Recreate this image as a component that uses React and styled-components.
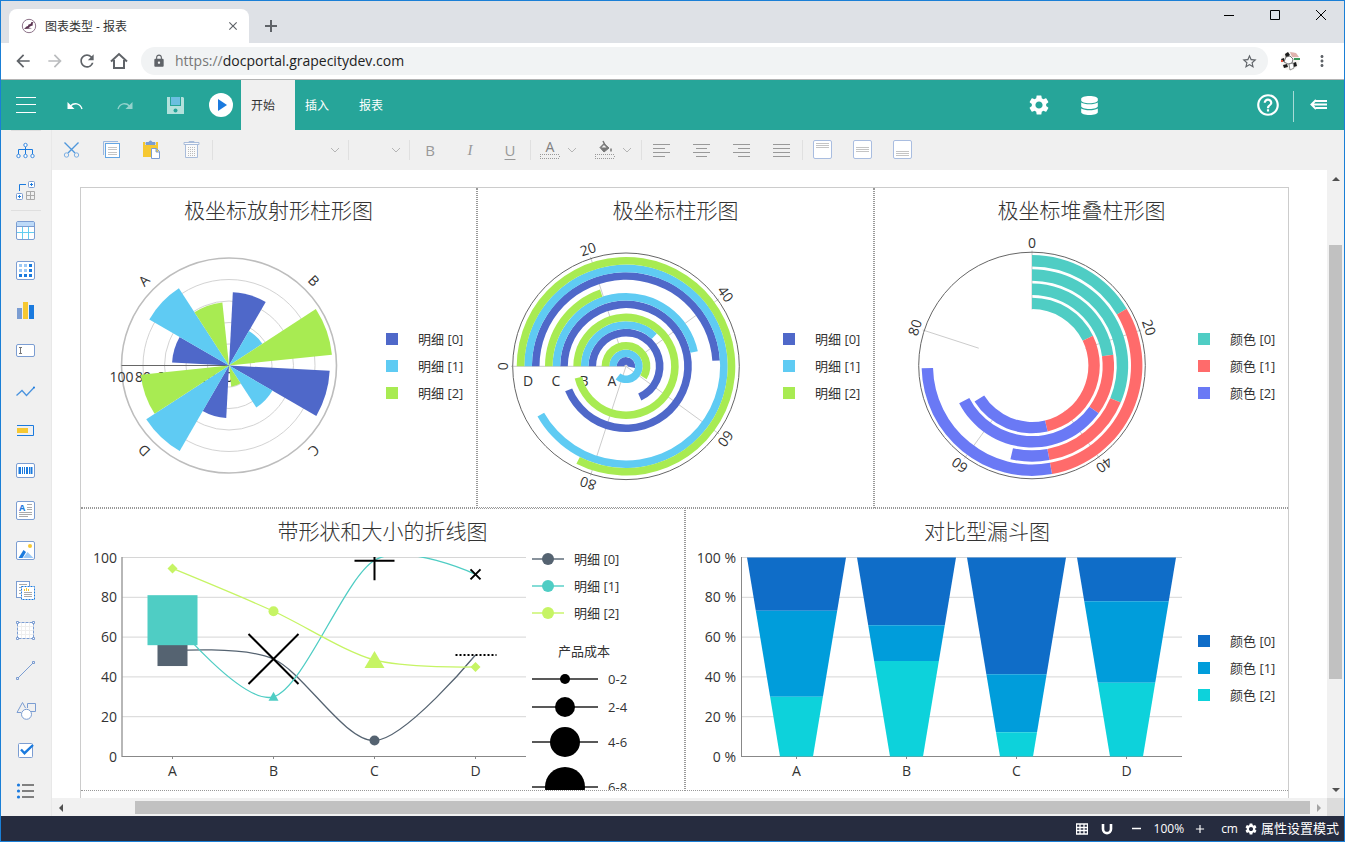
import React from 'react';
import styled, {createGlobalStyle} from 'styled-components';
import {MdArrowBack, MdArrowForward, MdRefresh, MdLock, MdStarBorder, MdMoreVert, MdClose, MdAdd, MdSettings, MdHelpOutline} from 'react-icons/md';
import {FaDatabase} from 'react-icons/fa';

const fontStack = '"Open Sans", "Noto Sans CJK SC", sans-serif';

const GlobalStyle = createGlobalStyle`
    * {
        box-sizing: border-box;
    }
    body {
        margin: 0;
        font-family: ${fontStack};
        color: #333;
    }
    button, input, select {
        font-family: inherit;
        color: inherit;
        border: 0;
        padding: 0;
        margin: 0;
        background: none;
    }
    svg {
        display: block;
    }
`;

const Window = styled.div`
    display: flex;
    flex-direction: column;
    height: 100vh;
    border: 1px solid #1a7fd6;
    overflow: hidden;
    background: #fff;
`;

const IconButton = styled.button`
    display: flex;
    align-items: center;
    justify-content: center;
    flex: none;
    width: ${props => props.$width || 20}px;
    height: 100%;
    color: ${props => props.$color || 'inherit'};
`;

const Spacer = styled.div`
    flex: 1;
`;

/* browser chrome */

const TabStrip = styled.div`
    display: flex;
    flex: none;
    height: 42px;
    background: #dee1e6;
`;

const Tabs = styled.div`
    display: flex;
    flex: 1;
    padding: 8px 0 0 8px;
`;

const BrowserTab = styled.div`
    display: flex;
    align-items: center;
    width: 240px;
    padding: 0 8px 0 12px;
    border-radius: 8px 8px 0 0;
    background: #fff;
    font-size: 12px;
`;

const TabTitle = styled.span`
    flex: 1;
    padding-left: 8px;
`;

const WindowControls = styled.div`
    display: flex;
    height: 28px;
`;

const AddressBar = styled.div`
    display: flex;
    align-items: center;
    flex: none;
    height: 37px;
    padding: 0 6px;
    border-bottom: 1px solid #b4b4b4;
    color: #5f6368;
`;

const AddressField = styled.div`
    display: flex;
    align-items: center;
    flex: 1;
    height: 28px;
    margin: 0 6px;
    padding: 0 10px 0 11px;
    border-radius: 14px;
    background: #f1f3f4;
`;

const AddressText = styled.div`
    flex: 1;
    padding-left: 9px;
    font-size: 14px;
    line-height: 28px;
    color: #777;
    b {
        font-weight: 400;
        color: #222;
    }
`;

/* ribbon */

const Ribbon = styled.header`
    display: flex;
    flex: none;
    height: 50px;
    background: #26a599;
    color: #fff;
`;

const RibbonTab = styled.button`
    width: 54px;
    padding-left: 10px;
    text-align: left;
    font-size: 12px;
    background: ${props => props.$active ? '#f0f0f0' : 'none'};
    color: ${props => props.$active ? '#333' : '#fff'};
`;

const RibbonGroup = styled.div`
    display: flex;
    margin-right: ${props => props.$gap || 0}px;
`;

const RibbonDivider = styled.div`
    width: 1px;
    height: 31px;
    margin-top: 11px;
    background: #a8dbd6;
`;

/* designer body */

const Body = styled.div`
    display: flex;
    flex: 1;
    min-height: 0;
`;

const Toolbox = styled.nav`
    flex: none;
    width: 51px;
    overflow: hidden;
    background: #f0f0f0;
    border-right: 1px solid #e8e8e8;
`;

const Tool = styled.button`
    display: flex;
    align-items: center;
    position: relative;
    width: 100%;
    height: 40px;
    padding-left: 15px;
    &::before {
        content: "";
        display: ${props => props.$divided ? 'block' : 'none'};
        position: absolute;
        top: 0;
        left: 10px;
        width: 30px;
        height: 1px;
        background: #dfdfdf;
    }
`;

const Designer = styled.div`
    display: flex;
    flex-direction: column;
    flex: 1;
    min-width: 0;
`;

const Toolbar = styled.div`
    display: flex;
    align-items: center;
    flex: none;
    height: 40px;
    background: #f0f0f0;
    color: #999;
`;

const ToolGroup = styled.div`
    display: flex;
    align-items: center;
    gap: ${props => props.$compact ? 7 : 20}px;
    height: 40px;
    padding: 0 ${props => props.$compact ? 9 : 10}px;
`;

const ToolDivider = styled.div`
    width: 1px;
    height: 20px;
    background: #e0e0e0;
`;

const SelectBox = styled.label`
    display: flex;
    align-items: center;
    width: ${props => props.$width}px;
    padding-right: 8px;
    select {
        flex: 1;
        min-width: 0;
        height: 24px;
        appearance: none;
        font-size: 13px;
    }
`;

const Letter = styled.span`
    font-size: 15px;
    line-height: 20px;
    font-family: ${props => props.$italic ? '"Liberation Serif", serif' : 'inherit'};
    font-style: ${props => props.$italic ? 'italic' : 'normal'};
    text-decoration: ${props => props.$underline ? 'underline' : 'none'};
    text-underline-offset: 3px;
`;

const Viewport = styled.div`
    display: grid;
    grid-template-columns: 1fr 17px;
    grid-template-rows: 1fr 18px;
    flex: 1;
    min-height: 0;
`;

const Canvas = styled.main`
    overflow: hidden;
    padding: 17px 38px 0 28px;
    background: #fff;
`;

const Track = styled.div`
    display: flex;
    flex-direction: ${props => props.$vertical ? 'column' : 'row'};
    padding: ${props => props.$vertical ? '0 2px' : '3px 0 2px'};
    background: #f1f1f1;
`;

const TrackButton = styled.button`
    display: flex;
    align-items: center;
    justify-content: center;
    flex: 0 0 17px;
    color: ${props => props.$muted ? '#a3a3a3' : '#505050'};
`;

const TrackPart = styled.div`
    flex: ${props => props.$share};
    background: ${props => props.$thumb ? '#c1c1c1' : 'none'};
`;

const Corner = styled.div`
    background: #dcdcdc;
`;

/* report page */

const Page = styled.section`
    min-height: 640px;
    border: 1px solid #ccc;
`;

const Row = styled.div`
    display: grid;
    grid-template-columns: ${props => props.$columns};
`;

const Cell = styled.article`
    min-width: 0;
    padding-top: 8px;
    border: 0 dotted #999;
    border-width: 0 1px 1px;
    &:first-child {
        border-left: 0;
    }
    &:last-child {
        border-right: 0;
    }
    ${Row} + ${Row} > & {
        border-top-width: 1px;
    }
`;

const Title = styled.h2`
    margin: 0;
    font-size: 21px;
    line-height: 28px;
    font-weight: 300;
    text-align: center;
`;

const ChartBody = styled.div`
    display: flex;
    align-items: center;
    padding-right: ${props => props.$flush ? 0 : 12}px;
`;

const Plot = styled.svg`
    flex: 1 1 0;
    min-width: 0;
    height: auto;
    font-size: 14px;
    fill: #333;
`;

const Legend = styled.ul`
    flex: 0 0 78px;
    margin: 0;
    padding: 0;
    list-style: none;
`;

const LegendItem = styled.li`
    display: flex;
    align-items: center;
    height: 27px;
    gap: 20px;
    font-size: 13px;
    white-space: nowrap;
`;

const Swatch = styled.span`
    width: 12px;
    height: 12px;
    background: ${props => props.$color};
`;

const SideLegend = styled.div`
    flex: 0 0 152px;
    align-self: stretch;
    contain: size;
    overflow: hidden;
    font-size: 13px;
`;

const LegendTitle = styled.div`
    width: 104px;
    margin-top: 12px;
    line-height: 27px;
    text-align: center;
`;

const SideItem = styled.div`
    display: flex;
    align-items: center;
    gap: 10px;
    height: ${props => props.$height || 27}px;
    line-height: 18px;
`;

const StatusBar = styled.footer`
    display: flex;
    align-items: center;
    justify-content: flex-end;
    flex: none;
    height: 25px;
    padding-right: 5px;
    background: #262c3f;
    color: #fff;
    font-size: 13px;
`;

const StatusText = styled.button`
    display: flex;
    align-items: center;
    gap: 3px;
    padding: 0 ${props => props.$pad || 0}px;
    font-size: ${props => props.$small ? 12 : 13}px;
    line-height: 25px;
    white-space: nowrap;
`;

const DETAIL_COLORS = ['#4f68c9', '#5fcbf3', '#a8eb52'];
const STACK_COLORS = ['#4fcdc4', '#ff6b6b', '#6a79f5'];
const LINE_COLORS = ['#556371', '#4fcdc4', '#c6f464'];
const FUNNEL_COLORS = ['#0f6dc8', '#009ddb', '#0dd2db'];
const CATEGORIES = ['A', 'B', 'C', 'D'];

const costs = [
    [53, 85.6, 59],
    [68.3, 37, 96.3],
    [93.8, 46.7, 19.8],
    [49, 91.8, 82.5]
];

// from the innermost ring to the outermost, as running totals
const stacks = [
    [17.8, 46.3, 66.1],
    [22.9, 34.9, 67.4],
    [31.3, 47.1, 53.6],
    [16.4, 47.1, 74.6]
];

const funnels = [
    [100, 73.3, 30],
    [100, 66, 48],
    [100, 41.3, 12.2],
    [100, 78, 37]
];

// degrees run clockwise from the top
const polar = (r, deg) => {
    const a = deg * Math.PI / 180;
    return [r * Math.sin(a), -r * Math.cos(a)];
};

const sector = (r0, r1, from, to) => {
    const large = to - from > 180 ? 1 : 0;
    return `M${polar(r1, from)}A${r1} ${r1} 0 ${large} 1 ${polar(r1, to)}L${polar(r0, to)}A${r0} ${r0} 0 ${large} 0 ${polar(r0, from)}Z`;
};

const PolarLabel = ({r, deg, children}) => {
    const [x, y] = polar(r, deg);
    return <text transform={`translate(${x} ${y}) rotate(${deg})`} textAnchor="middle" y="5">{children}</text>;
};

const RadialChart = () => (
    <Plot viewBox="0 0 305 283">
        <g transform="translate(148 141.5)">
            {[20, 40, 60, 80].map(v => <circle key={v} r={v * 1.075} fill="none" stroke="#d3d3d3"/>)}
            <circle r="107.5" fill="none" stroke="#bdbdbd" strokeWidth="1.6"/>
            <path d="M-107.5 0H0" stroke="#666"/>
            {[0, 20, 40, 60, 80, 100].map(v => (
                <text key={v} x={-v * 1.075} y="16" textAnchor="middle">{v}</text>
            ))}
            {costs.map((row, i) => row.map((v, j) => (
                <path
                    key={`${i}${j}`}
                    d={sector(0, v * 1.075, 273 + i * 90 + j * 27, 300 + i * 90 + j * 27)}
                    fill={DETAIL_COLORS[j]}
                />
            )))}
            {CATEGORIES.map((c, i) => <PolarLabel key={c} r={120} deg={i * 90 - 45}>{c}</PolarLabel>)}
        </g>
    </Plot>
);

const PolarChart = () => (
    <Plot viewBox="0 0 305 283">
        <g transform="translate(148 142.3)">
            {[0, 20, 40, 60, 80].map(v => (
                <path key={v} d={`M0 0L${polar(115, v * 3.6 - 90)}`} stroke="#ccc"/>
            ))}
            <circle r="113.3" fill="none" stroke="#666"/>
            {CATEGORIES.map((c, i) => (
                <text key={c} x={-14 - i * 28} y="20" textAnchor="middle">{c}</text>
            ))}
            {costs.map((row, i) => row.map((v, j) => {
                const inner = 1.6 + i * 28.3 + j * 7.6;
                return (
                    <path
                        key={`${i}${j}`}
                        d={sector(inner, inner + 7.6, -90, v * 3.6 - 90)}
                        fill={DETAIL_COLORS[j]}
                    />
                );
            }))}
            {[0, 20, 40, 60, 80].map(v => <PolarLabel key={v} r={123} deg={v * 3.6 - 90}>{v}</PolarLabel>)}
        </g>
    </Plot>
);

const StackedPolarChart = () => (
    <Plot viewBox="0 0 323 283">
        <g transform="translate(157 141.5)">
            {[0, 20, 40, 60, 80].map(v => (
                <path key={v} d={`M${polar(56, v * 3.6)}L${polar(115, v * 3.6)}`} stroke="#ccc"/>
            ))}
            <circle r="113.3" fill="none" stroke="#666"/>
            {stacks.map((row, i) => row.map((v, j) => {
                const inner = 56.4 + i * 14.2;
                return (
                    <path
                        key={`${i}${j}`}
                        d={sector(inner, inner + 11.4, (row[j - 1] || 0) * 3.6, v * 3.6)}
                        fill={STACK_COLORS[j]}
                    />
                );
            }))}
            {[0, 20, 40, 60, 80].map(v => <PolarLabel key={v} r={123} deg={v * 3.6}>{v}</PolarLabel>)}
        </g>
    </Plot>
);

const lineX = i => 91.5 + i * 101;
const lineY = v => 211.5 - v * 1.99;

const spline = values => {
    const pts = values.map((v, i) => [lineX(i), lineY(v)]);
    const slope = pts.map((p, i) => (
        i === 0 || i === pts.length - 1 ? [0, 0] : [(pts[i + 1][0] - pts[i - 1][0]) * 0.15, (pts[i + 1][1] - pts[i - 1][1]) * 0.15]
    ));
    return pts.slice(1).reduce((d, p, i) => {
        const a = pts[i];
        return `${d}C${a[0] + slope[i][0]} ${a[1] + slope[i][1]} ${p[0] - slope[i + 1][0]} ${p[1] - slope[i + 1][1]} ${p}`;
    }, `M${pts[0]}`);
};

const at = (i, v) => `translate(${lineX(i)} ${lineY(v)})`;

const LineChart = () => (
    <Plot viewBox="0 0 451 245">
        <clipPath id="plotArea"><rect x="41" y="12" width="404" height="201"/></clipPath>
        {[0, 20, 40, 60, 80, 100].map(v => (
            <g key={v}>
                <path d={`M41 ${lineY(v)}H445`} stroke="#d6d6d6"/>
                <text x="36" y={lineY(v) + 5} textAnchor="end">{v}</text>
            </g>
        ))}
        <path d="M41 12V212" stroke="#999" strokeWidth="1.4"/>
        <path d="M41 211.5H445" stroke="#888"/>
        <g clipPath="url(#plotArea)" fill="none" strokeWidth="1.3">
            <path d={spline([53, 49, 8, 51])} stroke={LINE_COLORS[0]}/>
            <rect transform={at(0, 53)} x="-15" y="-15" width="30" height="30" fill={LINE_COLORS[0]}/>
            <circle transform={at(2, 8)} r="5" fill={LINE_COLORS[0]}/>
            <path transform={at(1, 49)} d="M-25-25L25 25M25-25L-25 25" stroke="#000" strokeWidth="2"/>
            <path d={spline([68.5, 30, 98.6, 91.5])} stroke={LINE_COLORS[1]}/>
            <rect transform={at(0, 68.5)} x="-25" y="-25" width="50" height="50" fill={LINE_COLORS[1]}/>
            <path transform={at(1, 30)} d="M0-5L5 4H-5Z" fill={LINE_COLORS[1]}/>
            <path transform={at(2, 98.6)} d="M-20 0.5H20M0-20V20" stroke="#000" strokeWidth="2"/>
            <path transform={at(3, 91.5)} d="M-5-5L5 5M5-5L-5 5" stroke="#000" strokeWidth="2"/>
            <path d={spline([94.5, 73, 48.5, 45])} stroke={LINE_COLORS[2]}/>
            <path transform={at(0, 94.5)} d="M0-5L5 0L0 5L-5 0Z" fill={LINE_COLORS[2]}/>
            <circle transform={at(1, 73)} r="5" fill={LINE_COLORS[2]}/>
            <path transform={at(2, 48.5)} d="M0-9L10 8H-10Z" fill={LINE_COLORS[2]}/>
            <path transform={at(3, 45)} d="M0-5L5 0L0 5L-5 0Z" fill={LINE_COLORS[2]}/>
            <path transform={at(3, 51)} d="M-20 0H21" stroke="#000" strokeWidth="2" strokeDasharray="2 2"/>
        </g>
        {CATEGORIES.map((c, i) => (
            <g key={c}>
                <path d={`M${lineX(i)} 212v2`} stroke="#888"/>
                <text x={lineX(i)} y="231" textAnchor="middle">{c}</text>
            </g>
        ))}
    </Plot>
);

const FunnelChart = () => (
    <Plot viewBox="0 0 512 245">
        {[0, 20, 40, 60, 80, 100].map(v => (
            <g key={v}>
                <path d={`M56 ${lineY(v)}H496`} stroke="#d6d6d6"/>
                <text x="50" y={lineY(v) + 5} textAnchor="end">{v} %</text>
            </g>
        ))}
        <path d="M55.5 12V212M55 211.5H496" stroke="#888" fill="none"/>
        {funnels.map((row, i) => {
            const x = 110.5 + i * 110;
            return (
                <g key={CATEGORIES[i]}>
                    {row.map((top, j) => {
                        const bottom = row[j + 1] || 0;
                        const w1 = 16.5 + top * 0.33;
                        const w0 = 16.5 + bottom * 0.33;
                        return (
                            <path
                                key={j}
                                d={`M${x - w1} ${lineY(top)}H${x + w1}L${x + w0} ${lineY(bottom)}H${x - w0}Z`}
                                fill={FUNNEL_COLORS[j]}
                            />
                        );
                    })}
                    <path d={`M${x} 212v2`} stroke="#888"/>
                    <text x={x} y="231" textAnchor="middle">{CATEGORIES[i]}</text>
                </g>
            );
        })}
    </Plot>
);

const ColorLegend = ({label, colors}) => (
    <Legend>
        {colors.map((color, i) => (
            <LegendItem key={color}><Swatch $color={color}/>{label} [{i}]</LegendItem>
        ))}
    </Legend>
);

const SizeLegend = () => (
    <SideLegend>
        {LINE_COLORS.map((color, i) => (
            <SideItem key={color}>
                <svg width="32" height="12">
                    <path d="M0 6H32" stroke={color} strokeWidth="1.4"/>
                    <circle cx="16" cy="6" r="6" fill={color}/>
                </svg>
                明细 [{i}]
            </SideItem>
        ))}
        <LegendTitle>产品成本</LegendTitle>
        {[5, 10, 15, 20].map((r, i) => (
            <SideItem key={r} $height={Math.max(27, r * 2 + 10)}>
                <svg width="66" height={r * 2}>
                    <path d={`M0 ${r}H66`} stroke="#222" strokeWidth="1.4"/>
                    <circle cx="33" cy={r} r={r}/>
                </svg>
                {i * 2}-{i * 2 + 2}
            </SideItem>
        ))}
    </SideLegend>
);

const Icon = ({size = 20, children}) => (
    <svg width={size} height={size} viewBox={`0 0 ${size} ${size}`} fill="none" stroke="currentColor">{children}</svg>
);

const BLUE = '#1a7ade';
const STEEL = '#7b9dd2';
const YELLOW = '#f6c832';

const Frame = ({y = 1.5, height = 18}) => (
    <rect x="0.5" y={y} width="18" height={height} rx="1.5" fill="#fff" stroke={STEEL}/>
);

const Chevron = () => <svg width="10" height="6" fill="none" stroke="#b5b5b5"><path d="M1 1l4 4 4-4"/></svg>;

const toolIcons = {
    '组': (
        <Icon>
            <path d="M9.5 7v7M2.5 14V9.5H16.5V14" stroke={BLUE}/>
            {[[9.5, 5], [2.5, 16], [9.5, 16], [16.5, 16]].map(([x, y]) => (
                <circle key={`${x}${y}`} cx={x} cy={y} r="1.7" stroke="#3d8be0" fill="#fff"/>
            ))}
        </Icon>
    ),
    '数据导航': (
        <Icon>
            <path d="M3.5 11V4.5H10" stroke={BLUE}/>
            <rect x="12.5" y="1.5" width="6" height="6" rx="1" stroke={STEEL} fill="#fff"/>
            <rect x="0.5" y="13.5" width="6" height="6" rx="1" stroke={STEEL} fill="#fff"/>
            <path d="M14 4.5h3M15.5 3v3M2 16.5h3M3.5 15v3" stroke={BLUE}/>
            <path d="M10.5 11.5h8v8h-8zM14.5 11.5v8M10.5 15.5h8" stroke="#aaa"/>
        </Icon>
    ),
    '表格': (
        <Icon>
            <Frame/>
            <path d="M1 2h17v4H1z" fill="#bddaf8" stroke="none"/>
            <path d="M1 12.5H18M6.5 7V19M12.5 7V19" stroke="#63cdf0"/>
            <path d="M1 6.5H18" stroke={STEEL}/>
        </Icon>
    ),
    '矩表': (
        <Icon>
            <Frame/>
            {[0, 1, 2].map(r => [0, 1, 2].map(c => (
                <rect key={`${r}${c}`} x={3 + c * 5} y={4 + r * 5} width="3" height="3" stroke="none" fill={r === 2 || c === 2 ? BLUE : '#9cc9f6'}/>
            )))}
        </Icon>
    ),
    '图表': (
        <Icon>
            <g stroke="none">
                <path d="M1 8h5v11H1z" fill={STEEL}/>
                <path d="M7 2h5v17H7z" fill={YELLOW}/>
                <path d="M13 5h5v14h-5z" fill={BLUE}/>
            </g>
        </Icon>
    ),
    '文本框': <Icon><Frame y={4.5} height={12}/><path d="M3 7.5h3M3 13.5h3M4.5 7.5v6" stroke="#777"/></Icon>,
    '迷你图': <Icon><path d="M0.5 15.5L6 10.5L10.5 15.5L18 7.5" stroke="#4a93de" strokeWidth="1.3"/><circle cx="18" cy="7.5" r="1" fill={BLUE} stroke="none"/></Icon>,
    '条形图': <Icon><path d="M1 5.5H17.5V15.5H1" stroke={BLUE}/><path d="M1 8h11v5H1z" fill={YELLOW} stroke="none"/></Icon>,
    '条码': (
        <Icon>
            <Frame y={3.5} height={14}/>
            <path d="M3 7v7M6.5 7v7M8.5 7v7M13.5 7v7" stroke={BLUE} strokeWidth="1"/>
            <path d="M4 7v7M11 7v7M15.5 7v7" stroke={BLUE} strokeWidth="2"/>
        </Icon>
    ),
    '格式化文本': (
        <Icon>
            <Frame/>
            <text x="3" y="11" fontSize="9" fontWeight="700" fill={BLUE} stroke="none">A</text>
            <path d="M11 4.5h5M11 7.5h5M11 9.5h5M3 12.5h13M3 14.5h13M3 16.5h9" stroke="#aaa"/>
        </Icon>
    ),
    '图片': (
        <Icon>
            <Frame/>
            <g stroke="none">
                <circle cx="14" cy="6" r="2" fill={YELLOW}/>
                <path d="M2.5 18L7.5 10L10 12L6.5 18Z" fill={BLUE}/>
                <path d="M7 18L11.5 12L17.5 18Z" fill="#9cc9f6"/>
            </g>
        </Icon>
    ),
    '子报表': (
        <Icon>
            <rect x="0.5" y="1.5" width="13" height="16" stroke={STEEL} fill="#fff"/>
            <path d="M3 4.5h8M3 7.5h3M3 10.5h2M3 13.5h2" stroke="#aaa"/>
            <rect x="5.5" y="6.5" width="13" height="13" stroke={BLUE} fill="#fff" strokeDasharray="2 1"/>
            <path d="M8.5 9v2M10.5 8v3M12.5 9v2" stroke={YELLOW}/>
            <path d="M8 12.5h8M8 14.5h8M8 16.5h8" stroke="#aaa"/>
        </Icon>
    ),
    '容器': (
        <Icon>
            <rect x="1.5" y="2.5" width="16" height="16" fill="#fff" stroke={STEEL} strokeDasharray="3 1"/>
            <path d="M2 6.5h15M2 10.5h15M2 14.5h15M5.5 3v15M9.5 3v15M13.5 3v15" stroke="#eee"/>
            <path d="M0.5 1.5h2v2h-2zM16.5 1.5h2v2h-2zM0.5 17.5h2v2h-2zM16.5 17.5h2v2h-2z" stroke={STEEL} fill="#fff"/>
        </Icon>
    ),
    '线条': <Icon><path d="M2 18L17 3M0.5 17.5h2v2h-2zM16.5 1.5h2v2h-2z" stroke={STEEL}/></Icon>,
    '形状': (
        <Icon>
            <path d="M5 12.5H1L6.5 2.5L9.5 8" stroke={STEEL}/>
            <path d="M15 11.5H19.5V3.5H11.5V8" stroke={STEEL}/>
            <circle cx="10.5" cy="14.3" r="5" stroke={STEEL} fill="#fff"/>
        </Icon>
    ),
    '复选框': (
        <Icon>
            <rect x="2.5" y="3.5" width="14" height="14" rx="1" fill="#fff" stroke={STEEL}/>
            <path d="M5 9.5L8.5 13.2L17 5" stroke={BLUE} strokeWidth="2.4"/>
        </Icon>
    ),
    '列表': (
        <Icon>
            {[5, 11, 17].map(y => (
                <g key={y}>
                    <circle cx="2.5" cy={y} r="1.6" fill={BLUE} stroke="none"/>
                    <path d={`M6 ${y}H18`} stroke="#808080" strokeWidth="2"/>
                </g>
            ))}
        </Icon>
    )
};

const alignLines = {
    '左对齐': ['M1 4.5H18', 'M1 8.5H13', 'M1 12.5H18', 'M1 16.5H13'],
    '居中': ['M1 4.5H18', 'M4 8.5H15', 'M1 12.5H18', 'M4 16.5H15'],
    '右对齐': ['M1 4.5H18', 'M6 8.5H18', 'M1 12.5H18', 'M6 16.5H18'],
    '两端对齐': ['M1 4.5H18', 'M1 8.5H18', 'M1 12.5H18', 'M1 16.5H18']
};

const BrowserHead = () => (
    <>
        <TabStrip>
            <Tabs>
                <BrowserTab>
                    <svg width="16" height="16" viewBox="0 0 16 16">
                        <circle cx="8" cy="8" r="6.7" fill="#fff" stroke="#8d7389"/>
                        <path d="M3 11L5.5 8.5L7 8L7.5 6.5L9.5 6L10.5 4L12.5 4.2L11.5 6L12 7.2L9.5 8.2L7.5 9.5L11 10.2L7 10.8Z" fill="#5a3350"/>
                    </svg>
                    <TabTitle>图表类型 - 报表</TabTitle>
                    <IconButton $width={16} $color="#5f6368" aria-label="关闭标签页"><MdClose size={14}/></IconButton>
                </BrowserTab>
                <IconButton $width={44} $color="#5f6368" aria-label="新标签页">
                    <svg width="12" height="12" stroke="#5f6368" strokeWidth="2"><path d="M6 0V12M0 6H12"/></svg>
                </IconButton>
            </Tabs>
            <WindowControls>
                <IconButton $width={46} aria-label="最小化"><svg width="10" height="10"><path d="M0 5.5H10" stroke="#000"/></svg></IconButton>
                <IconButton $width={46} aria-label="最大化"><svg width="10" height="10"><path d="M0.5 0.5h9v9h-9z" stroke="#000" fill="none"/></svg></IconButton>
                <IconButton $width={46} aria-label="关闭"><svg width="10" height="10"><path d="M0 0L10 10M10 0L0 10" stroke="#000"/></svg></IconButton>
            </WindowControls>
        </TabStrip>
        <AddressBar>
            <IconButton $width={32} aria-label="后退"><MdArrowBack size={20}/></IconButton>
            <IconButton $width={32} $color="#babcbe" aria-label="前进"><MdArrowForward size={20}/></IconButton>
            <IconButton $width={32} aria-label="刷新"><MdRefresh size={20}/></IconButton>
            <IconButton $width={32} aria-label="主页">
                <Icon size={18}><path d="M1 9.5L9 2L17 9.5M4 8V16H14V8" strokeWidth="2"/></Icon>
            </IconButton>
            <AddressField>
                <MdLock size={14}/>
                <AddressText>https://<b>docportal.grapecitydev.com</b></AddressText>
                <MdStarBorder size={17}/>
            </AddressField>
            <IconButton $width={32} aria-label="用户">
                <svg width="20" height="20" viewBox="0 0 20 20">
                    <circle cx="10" cy="10" r="9.5" fill="#f7f5f2"/>
                    <path d="M5 3L8 1L10 4L6 7ZM1 8L4 7L5 11L2 10ZM3 14L7 13L8 16L4 17ZM13 12L16 11L17 15L14 16Z" fill="#1c1c1c"/>
                    <path d="M10 1L16 2L19 6L12 6Z" fill="#e0b3ae"/>
                    <path d="M14 7H20V9H14Z" fill="#3c9a5b"/>
                    <path d="M1 9h2v2H1z" fill="#e2523f"/>
                    <path d="M6 6L10 5L13 8L12 12L8 13L4 11Z" fill="#fff" stroke="#555" strokeWidth="0.8"/>
                    <path d="M9 13L13 12L14 17L10 19Z" fill="#fff" stroke="#777" strokeWidth="0.8"/>
                </svg>
            </IconButton>
            <IconButton $width={32} aria-label="菜单"><MdMoreVert size={18}/></IconButton>
        </AddressBar>
    </>
);

const RibbonBar = () => (
    <Ribbon>
        <IconButton $width={49} aria-label="菜单">
            <Icon><path d="M0 2.5H20M0 9.5H20M0 17.5H20"/></Icon>
        </IconButton>
        <IconButton $width={50} aria-label="撤销">
            <Icon size={16}><path d="M0.5 5L7.5 12H0.5Z" fill="#fff" stroke="none"/><path d="M3.5 9C7 5.5 13 6 15 12" strokeWidth="1.4"/></Icon>
        </IconButton>
        <IconButton $width={50} $color="#93d2cc" aria-label="重做">
            <Icon size={16}><path d="M15.5 5L8.5 12H15.5Z" fill="#93d2cc" stroke="none"/><path d="M12.5 9C9 5.5 3 6 1 12" strokeWidth="1.4"/></Icon>
        </IconButton>
        <IconButton $width={50} aria-label="保存">
            <svg width="17" height="17">
                <path d="M0 0H16L17 1V17H0Z" fill="#b3e1dc"/>
                <path d="M3 0H14V9H3Z" fill="#26a599"/>
                <path d="M4 0H13V8H4Z" fill="#6bbfe0"/>
                <circle cx="8.5" cy="13.5" r="2" fill="#26a599"/>
            </svg>
        </IconButton>
        <IconButton $width={41} aria-label="预览">
            <svg width="24" height="24"><circle cx="12" cy="12" r="12" fill="#fff"/><path d="M9 6L18 12L9 18Z" fill={BLUE}/></svg>
        </IconButton>
        <RibbonTab $active>开始</RibbonTab>
        <RibbonTab>插入</RibbonTab>
        <RibbonTab>报表</RibbonTab>
        <Spacer/>
        <RibbonGroup $gap={129}>
            <IconButton $width={50} aria-label="设置"><MdSettings size={24}/></IconButton>
            <IconButton $width={50} aria-label="数据"><FaDatabase size={19}/></IconButton>
        </RibbonGroup>
        <IconButton $width={50} aria-label="帮助"><MdHelpOutline size={26}/></IconButton>
        <RibbonDivider/>
        <IconButton $width={50} aria-label="收起">
            <Icon size={18}><path d="M6 4L1.5 8.5L6 13M2 8.5H17M6 5H17M6 12H17" strokeWidth="2"/></Icon>
        </IconButton>
    </Ribbon>
);

// the dotted swatch under the glyph shows that no colour is picked
const ColorIcon = ({children}) => (
    <svg width="20" height="32" viewBox="0 -6 20 32" fill="none" stroke="currentColor">
        {children}
        <path d="M0 14.5H20M0 18.5H20M0.5 16V17M19.5 16V17" strokeDasharray="1 1"/>
    </svg>
);

const EditToolbar = () => (
    <Toolbar>
        <ToolGroup>
            <IconButton aria-label="剪切">
                <Icon>
                    <path d="M2.5 2.5L13 13M16.5 2.5L6 13" stroke="#4f97dc" strokeWidth="1.4"/>
                    <circle cx="4.5" cy="15" r="2.2" stroke="#7db0e4"/><circle cx="14.5" cy="15" r="2.2" stroke="#7db0e4"/>
                </Icon>
            </IconButton>
            <IconButton aria-label="复制">
                <Icon>
                    <path d="M1.5 15V1.5H16" stroke="#9bb9e2"/>
                    <rect x="3.5" y="3.5" width="14" height="14" stroke="#64a5e3" fill="#fff"/>
                    <path d="M6 7.5h9M6 9.5h9M6 12.5h9M6 14.5h9" stroke="#c4c4c4"/>
                </Icon>
            </IconButton>
            <IconButton aria-label="粘贴">
                <Icon>
                    <path d="M1 2H16V17H1Z" fill={YELLOW} stroke="none"/>
                    <path d="M3 1.5H14V5H3Z" fill="#f0f0f0" stroke="none"/>
                    <path d="M4 4.5V2.5H7C7 0.5 10 0.5 10 2.5H13V4.5Z" fill={STEEL} stroke={STEEL}/>
                    <path d="M9.5 8.5H14.5L17.5 11.5V18.5H9.5ZM14 8.5V12H17.5" fill="#fff" stroke={STEEL}/>
                </Icon>
            </IconButton>
            <IconButton aria-label="删除">
                <Icon>
                    <path d="M2 4.5V2.5H17V4.5ZM7 2.5V1.5H12V2.5M3.5 5V17.5H15.5V5" fill="#fafafa" stroke="#a9bcda"/>
                    <path d="M6.5 7V16M8.5 7V16M10.5 7V16M12.5 7V16" stroke="#bbb" strokeDasharray="1 1"/>
                </Icon>
            </IconButton>
        </ToolGroup>
        <ToolDivider/>
        <SelectBox $width={135}><select aria-label="字体"/><Chevron/></SelectBox>
        <ToolDivider/>
        <SelectBox $width={60}><select aria-label="字号"/><Chevron/></SelectBox>
        <ToolDivider/>
        <ToolGroup>
            <IconButton aria-label="加粗"><Letter>B</Letter></IconButton>
            <IconButton aria-label="斜体"><Letter $italic>I</Letter></IconButton>
            <IconButton aria-label="下划线"><Letter $underline>U</Letter></IconButton>
        </ToolGroup>
        <ToolDivider/>
        <ToolGroup $compact>
            <IconButton aria-label="文字颜色">
                <ColorIcon><text x="10" y="12" fontSize="14" textAnchor="middle" fill="#808080" stroke="none">A</text></ColorIcon>
            </IconButton>
            <Chevron/>
        </ToolGroup>
        <ToolGroup $compact>
            <IconButton aria-label="填充颜色">
                <ColorIcon>
                    <path d="M5 7.5L9 3.5L14 8L9 12Z" fill="#777" stroke="#777"/>
                    <path d="M6.5 7.5L9 5L11.5 7.5Z" fill="#f0f0f0" stroke="none"/>
                    <path d="M8 1L10 5M16 8.5v3" stroke="#777" strokeWidth="1.5"/>
                </ColorIcon>
            </IconButton>
            <Chevron/>
        </ToolGroup>
        <ToolDivider/>
        <ToolGroup>
            {Object.entries(alignLines).map(([name, lines]) => (
                <IconButton key={name} aria-label={name}><Icon><path d={lines.join('')} stroke="#999"/></Icon></IconButton>
            ))}
        </ToolGroup>
        <ToolDivider/>
        <ToolGroup>
            {[['顶端', 5.5], ['中部', 9.5], ['底端', 13.5]].map(([name, y]) => (
                <IconButton key={name} aria-label={name}>
                    <Icon>
                        <rect x="0.5" y="0.5" width="18" height="18" rx="1.5" fill="#fff" stroke="#a9bde0"/>
                        <path d={`M3 ${y - 2}h13M3 ${y}h13M3 ${y + 2}h13`} stroke="#c4c4c4"/>
                    </Icon>
                </IconButton>
            ))}
        </ToolGroup>
    </Toolbar>
);

const Arrow = ({d}) => <svg width="8" height="8" fill="currentColor"><path d={d}/></svg>;

const ReportPage = () => (
    <Page>
        <Row $columns="396fr 397fr 414fr">
            <Cell>
                <Title>极坐标放射形柱形图</Title>
                <ChartBody><RadialChart/><ColorLegend label="明细" colors={DETAIL_COLORS}/></ChartBody>
            </Cell>
            <Cell>
                <Title>极坐标柱形图</Title>
                <ChartBody><PolarChart/><ColorLegend label="明细" colors={DETAIL_COLORS}/></ChartBody>
            </Cell>
            <Cell>
                <Title>极坐标堆叠柱形图</Title>
                <ChartBody><StackedPolarChart/><ColorLegend label="颜色" colors={STACK_COLORS}/></ChartBody>
            </Cell>
        </Row>
        <Row $columns="604fr 603fr">
            <Cell>
                <Title>带形状和大小的折线图</Title>
                <ChartBody $flush><LineChart/><SizeLegend/></ChartBody>
            </Cell>
            <Cell>
                <Title>对比型漏斗图</Title>
                <ChartBody><FunnelChart/><ColorLegend label="颜色" colors={FUNNEL_COLORS}/></ChartBody>
            </Cell>
        </Row>
    </Page>
);

const App = () => (
    <Window>
        <GlobalStyle/>
        <BrowserHead/>
        <RibbonBar/>
        <Body>
            <Toolbox>
                {Object.entries(toolIcons).map(([name, icon], i) => (
                    <Tool key={name} aria-label={name} $divided={i === 0 || i === 2}>{icon}</Tool>
                ))}
            </Toolbox>
            <Designer>
                <EditToolbar/>
                <Viewport>
                    <Canvas><ReportPage/></Canvas>
                    <Track $vertical>
                        <TrackButton aria-label="向上"><Arrow d="M0 6L4 2L8 6Z"/></TrackButton>
                        <TrackPart $share={58}/>
                        <TrackPart $share={434} $thumb/>
                        <TrackPart $share={102}/>
                        <TrackButton aria-label="向下"><Arrow d="M0 2L4 6L8 2Z"/></TrackButton>
                    </Track>
                    <Track>
                        <TrackButton aria-label="向左"><Arrow d="M6 0L2 4L6 8Z"/></TrackButton>
                        <TrackPart $share={66}/>
                        <TrackPart $share={1175} $thumb/>
                        <TrackButton $muted aria-label="向右"><Arrow d="M2 0L6 4L2 8Z"/></TrackButton>
                    </Track>
                    <Corner/>
                </Viewport>
            </Designer>
        </Body>
        <StatusBar>
            <IconButton $width={25} aria-label="网格">
                <Icon size={12}><path d="M0.5 1h11v10h-11zM4 1v10M8 1v10M0 4.5h12M0 7.5h12" strokeWidth="1.3"/></Icon>
            </IconButton>
            <IconButton $width={25} aria-label="吸附">
                <Icon size={12}><path d="M2 1V6C2 11.5 10 11.5 10 6V1" strokeWidth="2.6"/></Icon>
            </IconButton>
            <IconButton $width={34} aria-label="缩小"><svg width="9" height="9"><path d="M0 4.5H9" stroke="#fff" strokeWidth="1.5"/></svg></IconButton>
            <StatusText $small>100%</StatusText>
            <IconButton $width={31} aria-label="放大"><MdAdd size={14}/></IconButton>
            <StatusText $small $pad={6}>cm</StatusText>
            <StatusText><MdSettings size={14}/>属性设置模式</StatusText>
        </StatusBar>
    </Window>
);

export default App;
